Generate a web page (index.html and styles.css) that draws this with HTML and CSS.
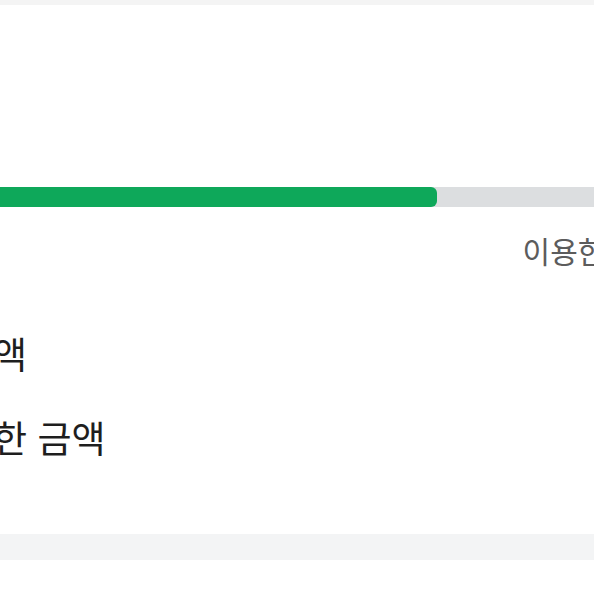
FILE: index.html
```html
<!DOCTYPE html>
<html lang="ko">
<head>
    <meta charset="UTF-8">
    <meta name="viewport" content="width=device-width, initial-scale=1.0">
    <title>이용 금액</title>
    <link rel="stylesheet" href="styles.css">
</head>
<body>
    <div class="top-band"></div>
    <div class="card">
        <div class="progress">
            <div class="progress-fill" style="width: 512px;"></div>
        </div>
        <div class="usage-note">이용한 금액</div>
        <ul class="rows">
            <li class="row">한도액</li>
            <li class="row">이용한 금액</li>
        </ul>
    </div>
    <div class="bottom-band"></div>
</body>
</html>
```

FILE: styles.css
```css
html, body {
    margin: 0;
    padding: 0;
    overflow: hidden;
}
body {
    font-family: "Noto Sans CJK KR", "Noto Sans", sans-serif;
    background-color: #ffffff;
    height: 594px;
}
.top-band {
    height: 5px;
    background-color: #f4f4f4;
}
.card {
    margin-left: -75px;
    margin-right: -95px;
    padding: 182px 20px 55px 0;
}
.progress {
    height: 20px;
    background-color: #dcdee0;
    margin-right: -20px;
}
.progress-fill {
    height: 100%;
    background-color: #0ea85a;
    border-radius: 0 6px 6px 0;
}
.usage-note {
    margin-top: 22px;
    font-size: 30px;
    line-height: 42px;
    color: #5c5c5c;
    text-align: right;
    white-space: nowrap;
}
.rows {
    list-style: none;
    margin: 40px 0 0 0;
    padding: 0;
}
.row {
    padding: 20px 0;
    font-size: 37px;
    line-height: 44px;
    color: #1e1e1e;
    white-space: nowrap;
}
.bottom-band {
    height: 26px;
    background-color: #f3f4f5;
}
```
